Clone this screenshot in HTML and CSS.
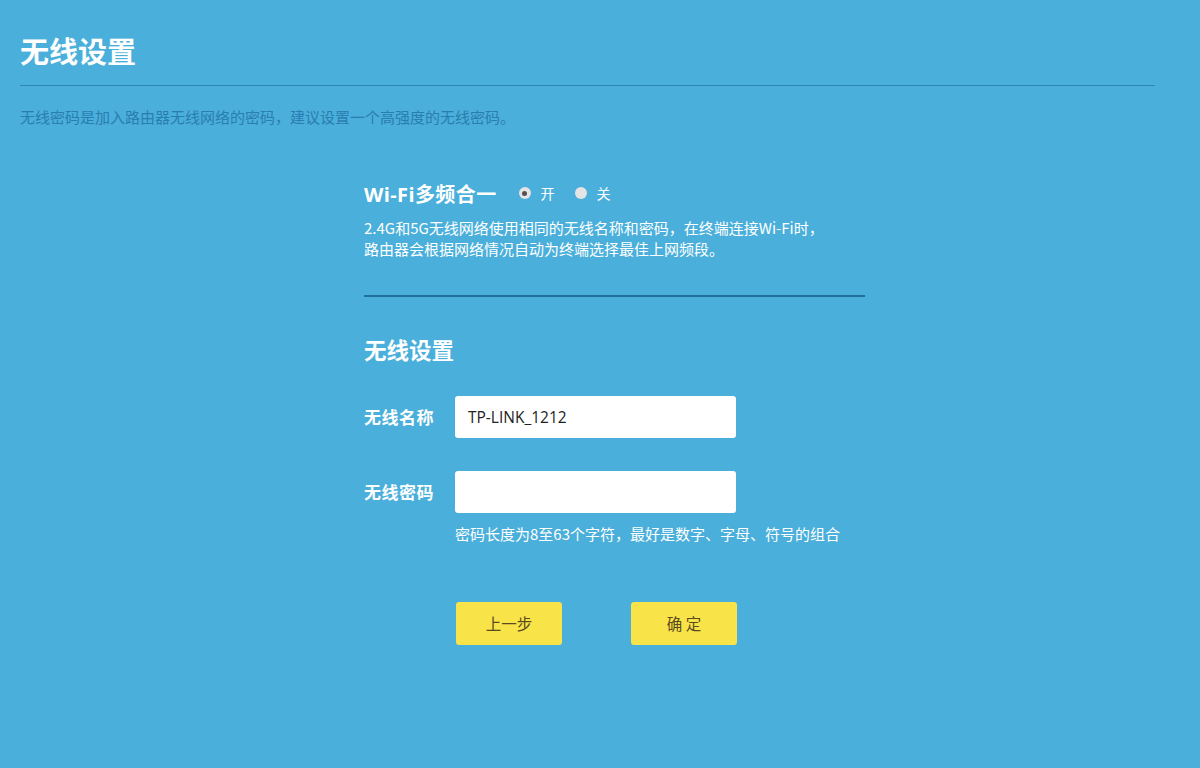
FILE: index.html
```html
<!DOCTYPE html>
<html lang="zh">
<head>
<meta charset="utf-8">
<title>无线设置</title>
<link rel="stylesheet" href="styles.css">
</head>
<body>
<div class="page">
  <h1 class="title">无线设置</h1>
  <div class="rule"></div>
  <p class="intro">无线密码是加入路由器无线网络的密码，建议设置一个高强度的无线密码。</p>

  <div class="panel">
    <div class="multi">
      <span class="multi-label">Wi-Fi多频合一</span>
      <label class="radio"><span class="dot on"></span>开</label>
      <label class="radio"><span class="dot"></span>关</label>
    </div>
    <p class="multi-desc">2.4G和5G无线网络使用相同的无线名称和密码，在终端连接Wi-Fi时，<br>路由器会根据网络情况自动为终端选择最佳上网频段。</p>
    <div class="rule short"></div>

    <h2 class="sub">无线设置</h2>
    <div class="field">
      <span class="flabel">无线名称</span>
      <div class="input">TP-LINK_1212</div>
    </div>
    <div class="field pw">
      <span class="flabel">无线密码</span>
      <div class="input"></div>
    </div>
    <p class="hint">密码长度为8至63个字符，最好是数字、字母、符号的组合</p>
    <div class="buttons">
      <button class="btn">上一步</button>
      <button class="btn">确 定</button>
    </div>
  </div>
</div>
</body>
</html>
```

FILE: styles.css
```css
html, body {
  margin: 0;
  padding: 0;
  background: #4aafda;
  font-family: "Noto Sans CJK SC", "Open Sans", sans-serif;
}
.page {
  padding: 28px 45px 0 20px;
  width: 1135px;
}
.title {
  margin: 0;
  font-size: 29px;
  line-height: 44px;
  font-weight: 700;
  color: #fff;
}
.rule {
  height: 1px;
  background: #2f86b3;
  margin-top: 13px;
}
.intro {
  margin: 22px 0 0;
  font-size: 15px;
  line-height: 18px;
  color: #2a7db0;
}
.panel {
  margin-left: 344px;
  width: 501px;
  padding-top: 52px;
}
.multi {
  display: flex;
  align-items: center;
  height: 30px;
}
.multi-label {
  font-size: 20px;
  font-weight: 700;
  color: #fff;
  font-family: "Open Sans", "Noto Sans CJK SC", sans-serif;
  margin-right: 22px;
  letter-spacing: 0.4px;
}
.radio {
  display: flex;
  align-items: center;
  font-size: 14px;
  color: #fff;
  margin-right: 20px;
}
.dot {
  width: 12px;
  height: 12px;
  border-radius: 50%;
  background: #e4e4e4;
  margin-right: 10px;
  position: relative;
}
.dot.on::after {
  content: "";
  position: absolute;
  left: 3.5px;
  top: 3.5px;
  width: 5px;
  height: 5px;
  border-radius: 50%;
  background: #5a5050;
}
.multi-desc {
  margin: 9px 0 0;
  font-size: 15px;
  line-height: 21px;
  color: #fff;
}
.rule.short {
  background: #1f6f9a;
  margin-top: 36px;
  height: 1.5px;
}
.sub {
  margin: 36px 0 0;
  font-size: 22.5px;
  line-height: 32px;
  font-weight: 700;
  color: #fff;
}
.field {
  display: flex;
  align-items: center;
  margin-top: 31px;
}
.field.pw { margin-top: 33px; }
.flabel {
  width: 91px;
  font-size: 17px;
  letter-spacing: 0.5px;
  font-weight: 700;
  color: #fff;
}
.input {
  width: 281px;
  height: 42px;
  background: #fff;
  border-radius: 3px;
  box-sizing: border-box;
  padding-left: 13px;
  font-size: 15.5px;
  line-height: 42px;
  color: #222;
  font-family: "Open Sans", sans-serif;
}
.hint {
  margin: 11px 0 0 91px;
  font-size: 15px;
  line-height: 20px;
  color: #fff;
}
.buttons {
  display: flex;
  gap: 69px;
  margin: 58px 0 0 92px;
}
.btn {
  width: 106px;
  height: 43px;
  border: none;
  border-radius: 3px;
  background: #f8e349;
  color: #5b4a1e;
  font-size: 15.5px;
  font-family: "Noto Sans CJK SC", sans-serif;
  padding: 0;
}
```
